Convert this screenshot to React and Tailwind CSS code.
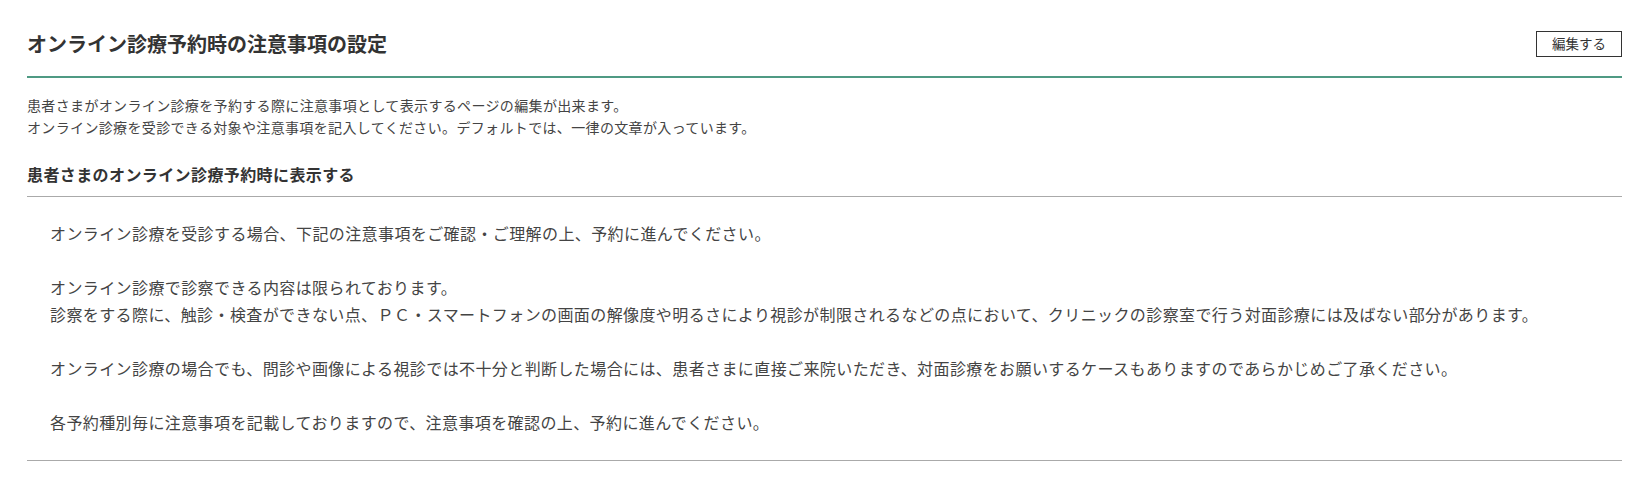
export default function App() {
  const paragraphs = [
    ["オンライン診療を受診する場合、下記の注意事項をご確認・ご理解の上、予約に進んでください。"],
    [
      "オンライン診療で診察できる内容は限られております。",
      "診察をする際に、触診・検査ができない点、ＰＣ・スマートフォンの画面の解像度や明るさにより視診が制限されるなどの点において、クリニックの診察室で行う対面診療には及ばない部分があります。",
    ],
    ["オンライン診療の場合でも、問診や画像による視診では不十分と判断した場合には、患者さまに直接ご来院いただき、対面診療をお願いするケースもありますのであらかじめご了承ください。"],
    ["各予約種別毎に注意事項を記載しておりますので、注意事項を確認の上、予約に進んでください。"],
  ];

  return (
    <div className="min-h-screen bg-white pl-[27px] pr-[23px] font-['Noto_Sans_CJK_JP',sans-serif] text-[#333]">
      {/* header */}
      <div className="flex items-center justify-between pt-[31px] pb-[19px] border-b-2 border-[#4f9a83]">
        <h1 className="text-[20px] leading-[26px] font-bold text-[#333]">
          オンライン診療予約時の注意事項の設定
        </h1>
        <button className="w-[86px] h-[26px] border border-[#333] bg-white text-[13.5px] leading-none text-[#333]">
          編集する
        </button>
      </div>

      <div className="mt-[16px] text-[14px] leading-[22px] tracking-wide text-[#444]">
        <p>患者さまがオンライン診療を予約する際に注意事項として表示するページの編集が出来ます。</p>
        <p>オンライン診療を受診できる対象や注意事項を記入してください。デフォルトでは、一律の文章が入っています。</p>
      </div>

      <h2 className="mt-[24px] pb-[10px] text-[16px] leading-[24px] font-bold tracking-wide text-[#333] border-b border-[#aaa]">
        患者さまのオンライン診療予約時に表示する
      </h2>

      <div className="pl-[23px] pt-[23px] pb-[24px] border-b border-[#aaa] text-[16px] leading-[27px] tracking-wide text-[#444] flex flex-col gap-[27px]">
        {paragraphs.map((lines, i) => (
          <div key={i}>
            {lines.map((l, j) => (
              <p key={j}>{l}</p>
            ))}
          </div>
        ))}
      </div>
    </div>
  );
}
